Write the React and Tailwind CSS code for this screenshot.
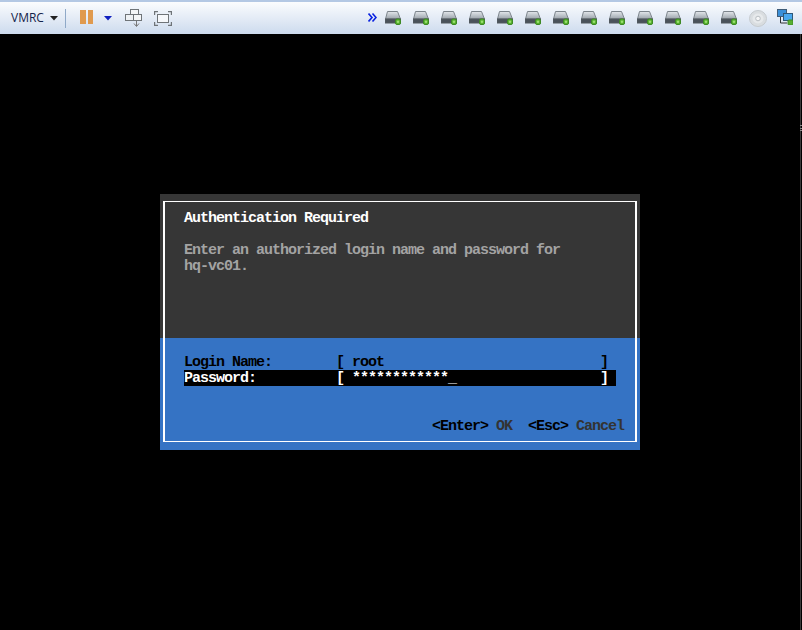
const disks = Array.from({ length: 13 }, (_, i) => i);

function Caret({ color }) {
  return (
    <svg width="8" height="5" viewBox="0 0 8 5" className="block">
      <path d="M0 0H8L4 4.5Z" fill={color} />
    </svg>
  );
}

function PauseIcon() {
  return (
    <div className="flex gap-[2px]">
      <div className="w-[6px] h-[14px] bg-[#e09a4e]" />
      <div className="w-[5px] h-[14px] bg-[#e09a4e]" />
    </div>
  );
}

function SendKeysIcon() {
  return (
    <svg width="17" height="18" viewBox="0 0 17 18" className="block">
      <rect x="5.5" y="0.5" width="8" height="5" fill="#f4f6f8" stroke="#6f7478" />
      <rect x="0.5" y="5.5" width="8" height="6" fill="#eef1f4" stroke="#6f7478" />
      <rect x="8.5" y="5.5" width="8" height="6" fill="#f4f6f8" stroke="#6f7478" />
      <path d="M11.5 12V17" stroke="#777" />
      <path d="M9 14.5L11.5 17.5L14 14.5" fill="none" stroke="#777" />
    </svg>
  );
}

function FitIcon() {
  return (
    <svg width="18" height="15" viewBox="0 0 18 15" className="block">
      <rect x="3.5" y="3.5" width="11" height="8" fill="#f6f8fb" stroke="#6f7478" />
      <path d="M0.5 4V0.5H4M14 0.5H17.5V4M17.5 11V14.5H14M4 14.5H0.5V11" fill="none" stroke="#6f7478" strokeWidth="1.4" />
    </svg>
  );
}

function ChevronsIcon() {
  return (
    <svg width="9" height="9" viewBox="0 0 9 9" className="block">
      <path d="M0.5 0.5L4 4.5L0.5 8.5M4.5 0.5L8 4.5L4.5 8.5" fill="none" stroke="#0a22e0" strokeWidth="1.6" />
    </svg>
  );
}

function DiskIcon() {
  return (
    <svg width="16" height="14" viewBox="0 0 16 14" className="block">
      <defs>
        <linearGradient id="diskTop" x1="0" y1="0" x2="0" y2="1">
          <stop offset="0" stopColor="#e4e8ec" />
          <stop offset="1" stopColor="#9aa2aa" />
        </linearGradient>
      </defs>
      <path d="M2.5 0.5H12.5L15.5 8H0.5Z" fill="url(#diskTop)" stroke="#7d858c" />
      <rect x="0.5" y="8" width="15" height="4" fill="#4a525a" stroke="#50585f" />
      <rect x="10.5" y="8" width="5" height="5.5" rx="1.5" fill="#58b030" stroke="#3d8a22" />
      <circle cx="13" cy="10.7" r="1.2" fill="#9be070" />
    </svg>
  );
}

function CdIcon() {
  return (
    <svg width="18" height="17" viewBox="0 0 18 17" className="block">
      <ellipse cx="9" cy="8.5" rx="8.5" ry="8" fill="#d9dde0" stroke="#c6cbcf" />
      <ellipse cx="9" cy="8.5" rx="5.5" ry="5" fill="#e6e9eb" />
      <circle cx="9" cy="8.5" r="2.3" fill="#f5f6f7" stroke="#b9bec3" />
    </svg>
  );
}

function NetworkIcon() {
  return (
    <svg width="16" height="16" viewBox="0 0 16 16" className="block">
      <rect x="0.5" y="0.5" width="9" height="7" fill="#3a8fd8" stroke="#3f5c78" />
      <path d="M3.5 8V14H10" fill="none" stroke="#333" />
      <rect x="6.5" y="4.5" width="9" height="7" fill="#4aa8ee" stroke="#2f5878" />
      <rect x="11" y="11" width="5" height="5" rx="1" fill="#58b030" stroke="#3d8a22" />
    </svg>
  );
}

function Row({ className = "", children }) {
  return <div className={`h-4 leading-[18px] whitespace-pre pl-6 ${className}`}>{children}</div>;
}

export default function App() {
  return (
    <div className="relative w-[802px] h-[630px] bg-black flex flex-col overflow-hidden">
      {/* toolbar */}
      <div className="h-[34px] shrink-0 flex items-center border-t-2 border-[#b4c8e4] bg-gradient-to-b from-[#fbfcfe] to-[#cddbee] font-['Open_Sans',sans-serif]">
        <span className="ml-[11px] w-[36px] text-[12px] text-[#14234a]">VMRC</span>
        <div className="ml-[3px]">
          <Caret color="#222" />
        </div>
        <div className="ml-[7px] w-[1px] h-[19px] bg-[#8fa9c8]" />
        <div className="ml-[14px] mb-[2px]">
          <PauseIcon />
        </div>
        <div className="ml-[11px]">
          <Caret color="#1020c0" />
        </div>
        <div className="ml-[13px]">
          <SendKeysIcon />
        </div>
        <div className="ml-[12px]">
          <FitIcon />
        </div>

        <div className="ml-[196px] mb-[2px]">
          <ChevronsIcon />
        </div>
        <div className="flex gap-[12px] ml-[8px]">
          {disks.map((d) => (
            <DiskIcon key={d} />
          ))}
        </div>
        <div className="ml-[12px]">
          <CdIcon />
        </div>
        <div className="ml-[10px] mb-[2px]">
          <NetworkIcon />
        </div>
      </div>

      {/* console dialog */}
      <div className="relative mt-[160px] ml-[160px] w-[480px] h-[256px] font-['Liberation_Mono',monospace] font-bold text-[15px] tracking-[-1px]">
        <div className="h-[144px] bg-[#363636] pt-4">
          <Row className="text-white">Authentication Required</Row>
          <div className="h-4" />
          <Row className="text-[#a3a3a3]">Enter an authorized login name and password for</Row>
          <Row className="text-[#a3a3a3]">hq-vc01.</Row>
        </div>
        <div className="h-[112px] bg-[#3573c4] pt-4 text-black">
          <Row>{"Login Name:        [ root"}<span>{"                           ]"}</span></Row>
          <div className="ml-6 w-[432px] h-4 leading-[18px] whitespace-pre bg-black text-white">
            {"Password:          [ ************_                  ]"}
          </div>
          <div className="h-8" />
          <div className="h-4 leading-[18px] whitespace-pre pl-[272px]">
            {"<Enter> "}
            <span className="text-[#333333]">OK</span>
            {"  <Esc> "}
            <span className="text-[#333333]">Cancel</span>
          </div>
        </div>
        <div className="absolute left-[3px] top-[7px] w-[474px] h-[241px] border-x-2 border-y border-white pointer-events-none" />
      </div>

      {/* window edge */}
      <div className="absolute right-[1px] top-[34px] bottom-0 w-[1px] bg-[#3a3a3a]" />
      <div className="absolute right-0 top-[125px] w-[2px] h-[1px] bg-[#888888]" />
      <div className="absolute right-0 top-[128px] w-[2px] h-[1px] bg-[#888888]" />
      <div className="absolute right-0 top-[130px] w-[2px] h-[1px] bg-[#888888]" />
    </div>
  );
}
